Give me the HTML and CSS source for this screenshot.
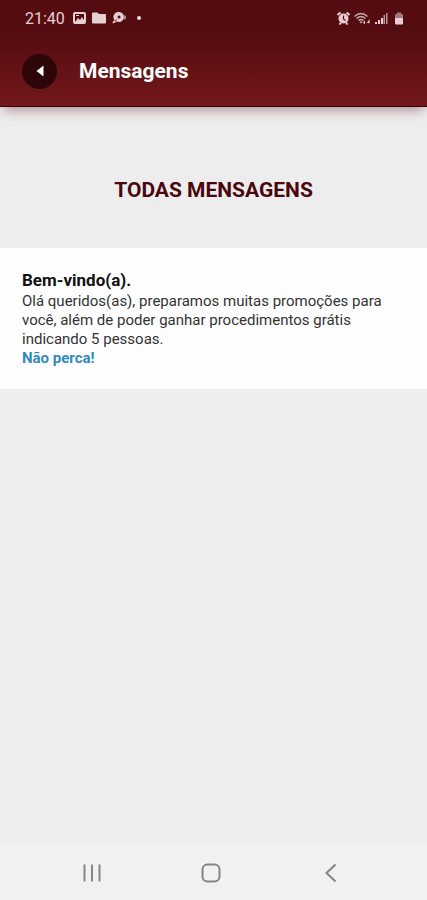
FILE: index.html
```html
<!DOCTYPE html>
<html lang="pt-BR">
<head>
    <meta charset="UTF-8">
    <meta name="viewport" content="width=device-width, initial-scale=1.0">
    <title>Mensagens</title>
    <link rel="stylesheet" href="styles.css">
</head>
<body>
    <header class="top">
        <div class="status-bar">
            <span class="time">21:40</span>
            <div class="status-left">
                <svg width="13" height="12" viewBox="0 0 13 12">
                    <rect x="1" y="1" width="11" height="10" rx="1" fill="none" stroke="currentColor" stroke-width="2"/>
                    <path d="M2 10l3-4 2 2 2-3 3 5z" fill="currentColor"/>
                    <path d="M3 3h3v1H3z" fill="currentColor"/>
                </svg>
                <svg width="14" height="12" viewBox="0 0 14 12">
                    <path d="M1 0.5h4.500l1.500 1.500H13a1 1 0 0 1 1 1V10.500a1 1 0 0 1-1 1H1a1 1 0 0 1-1-1V1.500a1 1 0 0 1 1-1z" fill="currentColor"/>
                </svg>
                <svg width="15" height="12" viewBox="0 0 15 12">
                    <path d="M7 0a5 5 0 1 1-2 9.600L1 11.500 0.500 10l2-2A5 5 0 0 1 7 0z" fill="currentColor"/>
                    <path d="M12 3l2 1v3l-2 1z" fill="currentColor" opacity="0.6"/>
                    <circle cx="7" cy="5" r="1.500" fill="#550c10"/>
                    <path d="M3 9.500l1.500-2" stroke="#550c10" stroke-width="1"/>
                </svg>
            </div>
            <span class="dot"></span>
            <div class="status-right">
                <svg width="13" height="13" viewBox="0 0 13 13">
                    <path d="M0.500 3L3.500 0.500M12.500 3L9.500 0.500M2.500 12.500l1.500-2M10.500 12.500l-1.500-2" stroke="currentColor" stroke-width="2"/>
                    <circle cx="6.500" cy="6.500" r="5" fill="currentColor"/>
                    <path d="M6.500 3.500V7l2 1.500" fill="none" stroke="#550c10" stroke-width="1.200"/>
                </svg>
                <svg width="17" height="13" viewBox="0 0 17 13">
                    <g fill="none" stroke="currentColor" stroke-width="1.500" opacity="0.8">
                        <path d="M0.500 4.500Q7 -1.500 13.500 4.500"/>
                        <path d="M2.500 6.500Q7 2.500 11.500 6.500"/>
                        <path d="M4.500 8.500Q7 6.500 9.500 8.500"/>
                    </g>
                    <path d="M5.500 9.500h3L7 11.500z" fill="currentColor"/>
                    <path d="M9 10.500l2-2v4zM12 10h1.500l2-3v4.500z" fill="currentColor"/>
                </svg>
                <svg width="13" height="13" viewBox="0 0 13 13">
                    <path d="M0 10h2v2H0zM3 8h2v4H3zM6 6h2v6H6z" fill="currentColor"/>
                    <path d="M8.500 3h1.500v9H8.500zM11 1h1.500v11H11z" fill="currentColor" opacity="0.7"/>
                </svg>
                <svg class="battery" width="10" height="13" viewBox="0 0 10 13">
                    <path d="M3 0.500h4v1.500h1a1 1 0 0 1 1 1V6H1V3a1 1 0 0 1 1-1h1z" fill="currentColor" opacity="0.55"/>
                    <path d="M1 6h8v5.500a1 1 0 0 1-1 1H2a1 1 0 0 1-1-1z" fill="currentColor"/>
                </svg>
            </div>
        </div>
        <div class="title-bar">
            <button class="back-btn" type="button" aria-label="Voltar">
                <svg width="8" height="12" viewBox="0 0 8 12">
                    <path d="M7.500 0.500v11L0.500 6z" fill="#fff"/>
                </svg>
            </button>
            <h1>Mensagens</h1>
        </div>
    </header>

    <main class="content">
        <h2>TODAS MENSAGENS</h2>
        <article class="message">
            <h3>Bem-vindo(a).</h3>
            <p>Olá queridos(as), preparamos muitas promoções para você, além de poder ganhar procedimentos grátis indicando 5 pessoas.</p>
            <a href="#">Não perca!</a>
        </article>
    </main>

    <nav class="system-nav">
        <button type="button" aria-label="Recentes">
            <svg width="20" height="20" viewBox="0 0 20 20">
                <path d="M2.500 1.500v17M10 1.500v17M17.500 1.500v17" stroke="currentColor" stroke-width="2"/>
            </svg>
        </button>
        <button type="button" aria-label="Início">
            <svg width="20" height="20" viewBox="0 0 20 20">
                <rect x="1.500" y="1.500" width="17" height="17" rx="5" fill="none" stroke="currentColor" stroke-width="2"/>
            </svg>
        </button>
        <button type="button" aria-label="Retornar">
            <svg width="20" height="20" viewBox="0 0 20 20">
                <path d="M14.500 1.500L5.500 10l9 8.500" fill="none" stroke="currentColor" stroke-width="2"/>
            </svg>
        </button>
    </nav>
</body>
</html>
```

FILE: styles.css
```css
* {
    box-sizing: border-box;
}

body {
    display: flex;
    flex-direction: column;
    min-height: 100vh;
    margin: 0;
    font-family: Roboto, sans-serif;
    background-color: #ededed;
}

h1, h2, h3, p {
    margin: 0;
}

button {
    display: flex;
    justify-content: center;
    align-items: center;
    padding: 0;
    border: none;
    background: none;
    cursor: pointer;
}

svg {
    display: block;
}

.top {
    background: linear-gradient(#550c10 30%, #72181c);
    border-bottom: 1px solid #3c0004;
    box-shadow: 0 6px 12px -4px rgba(90, 10, 20, 0.5);
}

.status-bar {
    display: flex;
    align-items: center;
    height: 36px;
    padding: 0 23px 0 25px;
    color: #e6cfd0;
}

.time {
    font-size: 16px;
    margin-right: 8px;
}

.status-left {
    display: flex;
    gap: 6px;
}

.dot {
    width: 4px;
    height: 4px;
    margin-left: 10px;
    border-radius: 50%;
    background-color: #f0e0e0;
}

.status-right {
    display: flex;
    gap: 4px;
    margin-left: auto;
}

.battery {
    margin-left: 2px;
}

.title-bar {
    display: flex;
    align-items: center;
    gap: 22px;
    height: 70px;
    padding: 0 22px;
}

.back-btn {
    width: 35px;
    height: 35px;
    border-radius: 50%;
    background-color: #2e0508;
}

.title-bar h1 {
    font-size: 21px;
    font-weight: 700;
    color: #fff;
}

.content {
    flex: 1;
}

.content h2 {
    padding: 71px 22px 46px;
    font-size: 21px;
    font-weight: 700;
    line-height: 24px;
    text-align: center;
    color: #4b070e;
}

.message {
    padding: 22px 22px 21px;
    background-color: #fefefe;
    font-size: 15px;
    line-height: 19px;
    color: #333;
}

.message h3 {
    margin-bottom: 2px;
    font-size: 17px;
    font-weight: 700;
    line-height: 20px;
    color: #111;
}

.message a {
    display: block;
    font-weight: 700;
    text-decoration: none;
    color: #318abb;
}

.system-nav {
    display: grid;
    grid-template-columns: repeat(3, 1fr);
    height: 56px;
    padding: 2px 36px 0 32px;
    background-color: #f1f1f1;
}

.system-nav button {
    color: #858585;
}
```
